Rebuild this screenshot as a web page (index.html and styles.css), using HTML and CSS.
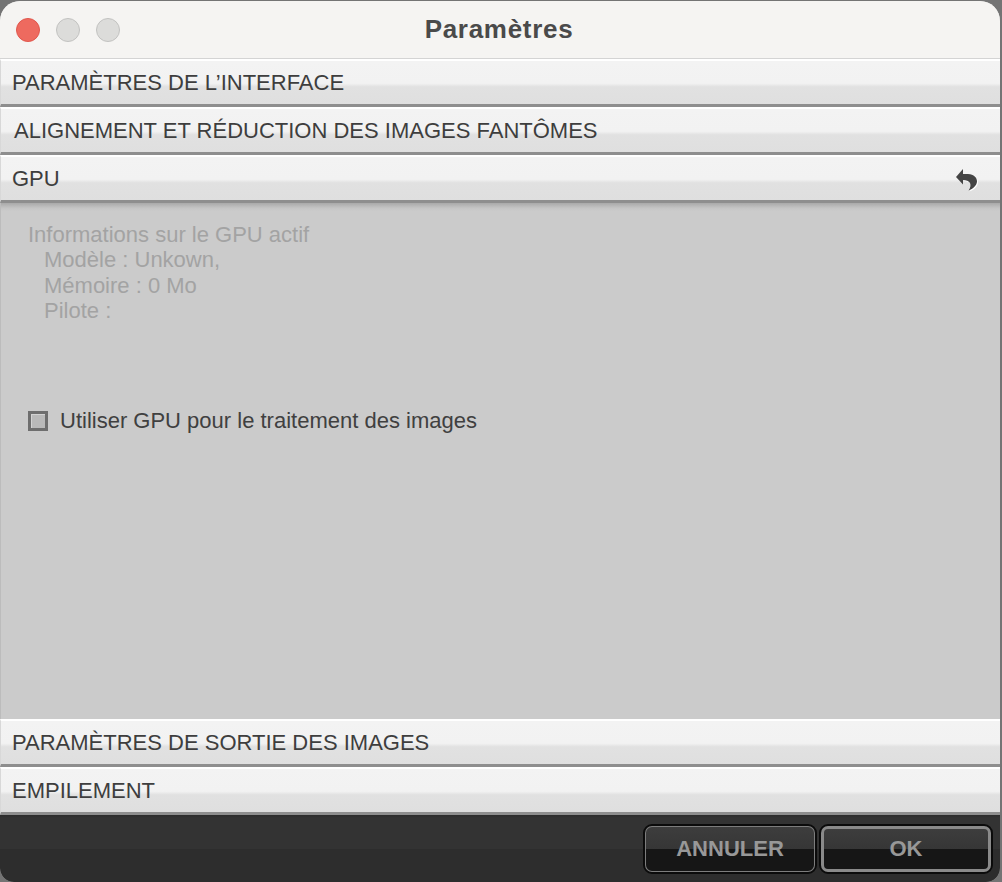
FILE: index.html
```html
<!DOCTYPE html>
<html lang="fr">
<head>
<meta charset="utf-8">
<title>Paramètres</title>
<link rel="stylesheet" href="styles.css">
</head>
<body>
<div class="window">
  <header class="titlebar">
    <div class="lights">
      <span class="light close"></span>
      <span class="light"></span>
      <span class="light"></span>
    </div>
    <h1 class="title">Paramètres</h1>
  </header>
  <div class="section"><span>PARAMÈTRES DE L’INTERFACE</span></div>
  <div class="section shifted"><span>ALIGNEMENT ET RÉDUCTION DES IMAGES FANTÔMES</span></div>
  <div class="section">
    <span>GPU</span>
    <svg class="reset" width="24" height="24" viewBox="0 0 24 24">
      <path class="reset-halo" d="M9 17 L9 13 C12 13 15 14 16 16 C17 18 16.500 21 14.500 23.500 C19 22 23 18 23 14.500 C23 11 20 7 14 7 L9 7 Z"/>
      <path class="reset-arrow" d="M1 9 L8 1 L8 6 L13 6 C19 6 22 10 22 13.500 C22 17 18 21 13.500 22.500 C15.500 20 16 17 15 15 C14 13 11 12 8 12 L8 16.500 Z"/>
    </svg>
  </div>
  <main class="panel">
    <div class="info">
      <div>Informations sur le GPU actif</div>
      <div class="indent">Modèle : Unkown,</div>
      <div class="indent">Mémoire : 0 Mo</div>
      <div class="indent">Pilote :</div>
    </div>
    <label class="check"><span class="box"></span><span>Utiliser GPU pour le traitement des images</span></label>
  </main>
  <div class="section"><span>PARAMÈTRES DE SORTIE DES IMAGES</span></div>
  <div class="section"><span>EMPILEMENT</span></div>
  <footer class="footer">
    <button class="btn">ANNULER</button>
    <button class="btn default">OK</button>
  </footer>
</div>
</body>
</html>
```
FILE: styles.css
```css
* { box-sizing: border-box; }
html, body { margin: 0; height: 100%; background: #747474; }
body { width: 1002px; height: 882px; overflow: hidden; font-family: "Liberation Sans", Arial, sans-serif; }
.window {
  width: 1000px; height: 881px; margin-top: 1px;
  display: flex; flex-direction: column;
  border-radius: 20px 20px 14px 14px;
  overflow: hidden;
  background: #cbcbcb;
}
.titlebar {
  height: 58px; flex: none;
  background: #f5f4f2;
  border-bottom: 1px solid #d4d4d4;
  display: flex; align-items: center; justify-content: center;
  position: relative;
}
.lights { position: absolute; left: 16px; top: 17px; display: flex; gap: 16px; }
.light { width: 24px; height: 24px; border-radius: 50%; background: #dcdcda; border: 1px solid #c2c2c0; }
.light.close { background: #ee6a5f; border-color: #e0574d; }
.title { margin: 0; font-size: 26px; font-weight: 700; color: #4a4a4a; letter-spacing: 0.7px; position: relative; left: -1px; }
.section {
  height: 48px; flex: none;
  display: flex; align-items: center; justify-content: space-between;
  padding: 0 23px 0 11px;
  font-size: 22px; color: #3e3e3e;
  background: linear-gradient(#f3f3f3 0, #f2f2f2 52%, #e1e1e1 60%, #dfdfdf 100%);
  border-top: 2px solid #fff;
  border-bottom: 3px solid #8e8e8e;
  border-left: 1px solid #d8d8d8;
}
.section.shifted { padding-left: 13px; }
.reset { flex: none; position: relative; left: 2px; top: 1px; }
.reset-arrow { fill: #444; }
.reset-halo { fill: #fff; }
.panel {
  flex: 1; padding: 19px 27px 0;
  background: linear-gradient(#a9a9a9 0, #c4c4c4 5px, #cbcbcb 8px);
  font-size: 22px; color: #a3a3a3;
  border-left: 1px solid #bcbcbc;
}
.info { line-height: 25.400px; height: 186px; }
.indent { padding-left: 16px; }
.check { display: flex; align-items: center; gap: 12px; color: #404040; height: 26px; }
.box {
  width: 20px; height: 20px; flex: none;
  background: #b9b9b9;
  border: 3px solid #6e6e6e;
  box-shadow: inset 1px 1px 0 #d2d2d2;
}
.footer {
  flex: none; height: 67px;
  display: flex; justify-content: flex-end; align-items: flex-start; gap: 4px;
  padding: 10px 8px 0 0;
  background: linear-gradient(#2c2c2c 0, #333 3px, #333 50%, #2d2d2d 50%, #2d2d2d 100%);
}
.btn {
  width: 172px; height: 48px;
  border-radius: 8px;
  border: 2px solid #7d7d7d;
  outline: 2px solid #0b0b0b;
  outline-offset: -1px;
  background: linear-gradient(#3d3d3d 0, #363636 50%, #161616 50%, #161616 100%);
  color: #989898;
  font: 700 22px "Liberation Sans", Arial, sans-serif;
}
.btn.default { border: 4px solid #8a8a8a; }
```
